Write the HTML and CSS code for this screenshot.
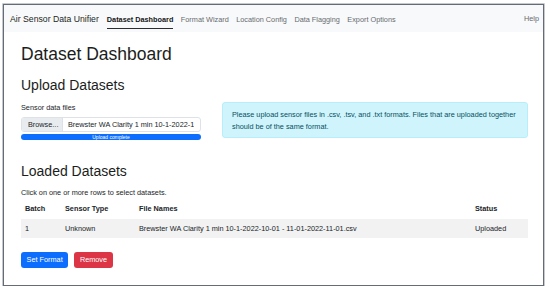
FILE: index.html
```html
<!DOCTYPE html>
<html lang="en">
<head>
<meta charset="utf-8">
<title>Air Sensor Data Unifier</title>
<link rel="stylesheet" href="styles.css">
</head>
<body>
<div class="frame">
  <nav class="navbar">
    <span class="brand">Air Sensor Data Unifier</span>
    <ul class="nav-links">
      <li><a class="nav-link active">Dataset Dashboard</a></li>
      <li><a class="nav-link">Format Wizard</a></li>
      <li><a class="nav-link">Location Config</a></li>
      <li><a class="nav-link">Data Flagging</a></li>
      <li><a class="nav-link">Export Options</a></li>
    </ul>
    <a class="nav-link help">Help</a>
  </nav>
  <main class="container">
    <h1 class="title">Dataset Dashboard</h1>
    <h2 class="section-title">Upload Datasets</h2>
    <div class="upload-row">
      <div class="upload-col">
        <div class="label">Sensor data files</div>
        <div class="file-input">
          <span class="browse">Browse...</span>
          <span class="file-name">Brewster WA Clarity 1 min 10-1-2022-1</span>
        </div>
        <div class="progress"><div class="progress-bar" style="width:100%">Upload complete</div></div>
      </div>
      <div class="alert">Please upload sensor files in .csv, .tsv, and .txt formats. Files that are uploaded together should be of the same format.</div>
    </div>
    <h2 class="section-title loaded">Loaded Datasets</h2>
    <p class="hint">Click on one or more rows to select datasets.</p>
    <table class="table">
      <colgroup>
        <col class="c-batch"><col class="c-type"><col class="c-files"><col class="c-status">
      </colgroup>
      <thead>
        <tr><th>Batch</th><th>Sensor Type</th><th>File Names</th><th>Status</th></tr>
      </thead>
      <tbody>
        <tr class="striped"><td>1</td><td>Unknown</td><td>Brewster WA Clarity 1 min 10-1-2022-10-01 - 11-01-2022-11-01.csv</td><td>Uploaded</td></tr>
      </tbody>
    </table>
    <div class="actions">
      <button class="btn btn-primary">Set Format</button>
      <button class="btn btn-danger">Remove</button>
    </div>
  </main>
</div>
</body>
</html>
```
FILE: styles.css
```css
* { box-sizing: border-box; }
html, body { margin: 0; padding: 0; background: #fff; }
body {
  font-family: "Liberation Sans", Arial, sans-serif;
  color: #212529;
  font-size: 7.3px;
}
.frame {
  margin: 4px 6px 0 3px;
  width: 541px;
  height: 282px;
  border: 1px solid #656c75;
  box-shadow: 0 0 0 0.7px #aeb2b8;
  overflow: hidden;
  background: #fff;
}
.navbar {
  display: flex;
  align-items: center;
  height: 27px;
  background: #f8f9fa;
  padding: 0 4px 0 6px;
}
.brand {
  font-size: 8.7px;
  color: #1d1f21;
  margin-right: 8px;
}
.nav-links {
  display: flex;
  gap: 7.5px;
  list-style: none;
  margin: 0;
  padding: 0;
  flex: 1;
}
.nav-link {
  display: block;
  font-size: 7.3px;
  color: #676b70;
  padding: 4px 0;
  border-bottom: 1.3px solid transparent;
  margin-top: 2px;
}
.nav-link.active {
  color: #151719;
  font-weight: bold;
  border-bottom-color: #2b2d30;
}
.help { margin-top: 0; }
.container {
  padding: 0 15px 0 17px;
}
.title {
  font-size: 17.5px;
  font-weight: normal;
  line-height: 21px;
  margin: 12px 0 12px;
  color: #1b1e21;
}
.section-title {
  font-size: 14px;
  font-weight: normal;
  line-height: 17px;
  margin: 0 0 8px;
  color: #1b1e21;
}
.section-title.loaded { margin: 22.5px 0 7px; }
.upload-row {
  display: grid;
  grid-template-columns: 180px 1fr;
  gap: 21px;
  align-items: start;
}
.label { line-height: 11px; margin-bottom: 4px; }
.file-input {
  display: flex;
  height: 15px;
  border: 1px solid #dee2e6;
  border-radius: 3px;
  overflow: hidden;
  line-height: 13px;
  white-space: nowrap;
}
.browse {
  background: #e9ecef;
  padding: 0 5px 0 6px;
  border-right: 1px solid #dee2e6;
  flex: none;
  width: 41px;
}
.file-name {
  padding-left: 5px;
  overflow: hidden;
  min-width: 0;
}
.progress {
  margin-top: 2px;
  height: 6px;
  border-radius: 3px;
  background: #e9ecef;
  overflow: hidden;
}
.progress-bar {
  height: 100%;
  background: #0d6efd;
  color: #fff;
  font-size: 5px;
  line-height: 6px;
  text-align: center;
}
.alert {
  background: #cff4fc;
  border: 1px solid #b6effb;
  color: #07505f;
  border-radius: 3px;
  padding: 6px 9px 4px;
  line-height: 12px;
  height: 36px;
}
.hint { margin: 0; line-height: 11px; }
.table {
  width: 100%;
  border-collapse: collapse;
  table-layout: fixed;
  margin-top: 1.5px;
}
.c-batch { width: 40px; }
.c-type { width: 74px; }
.c-status { width: 57px; }
.table th, .table td {
  text-align: left;
  padding: 0 4px;
  height: 19.6px;
  line-height: 11px;
  white-space: nowrap;
  overflow: hidden;
}
.table th { font-weight: bold; }
.table tr.striped td { background: #f2f2f2; }
.actions {
  display: flex;
  gap: 6px;
  margin-top: 13.4px;
}
.btn {
  font-family: inherit;
  font-size: 7.3px;
  color: #fff;
  border: none;
  border-radius: 3px;
  height: 16.6px;
  padding: 0 5.6px;
  line-height: 16.6px;
  white-space: nowrap;
}
.btn-primary { background: #0d6efd; }
.btn-danger { background: #dc3545; }
```
